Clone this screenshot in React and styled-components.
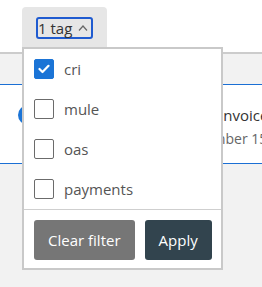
import React, { useState } from 'react';
import styled, { createGlobalStyle } from 'styled-components';

const GlobalStyle = createGlobalStyle`
  html, body {
    margin: 0;
    padding: 0;
    background: #f2f2f2;
    font-family: "Open Sans", "Liberation Sans", sans-serif;
  }
  * { box-sizing: border-box; }
`;

const Page = styled.div`
  width: 262px;
  height: 287px;
  overflow: hidden;
  background: #f2f2f2;
`;

const Toolbar = styled.div`
  height: 54px;
  padding: 7px 0 0 22px;
  background: #fff;
  border-bottom: 2px solid #cccccc;
`;

const Filter = styled.div`
  position: relative;
  display: inline-flex;
  height: 40px;
  padding: 10px 14px 8px;
  background: #e6e6e6;
  border-radius: 4px 4px 0 0;
`;

const TagButton = styled.button`
  display: inline-flex;
  align-items: center;
  gap: 6px;
  height: 22px;
  padding: 0 3px 0 0;
  margin: 0;
  border: 2px solid #1f5bd0;
  border-radius: 3px;
  background: transparent;
  font-family: inherit;
  font-size: 15px;
  line-height: 18px;
  color: #333;
  cursor: pointer;
`;

const Menu = styled.div`
  position: absolute;
  top: 100%;
  left: 0;
  z-index: 2;
  width: 201px;
  background: #fff;
  border: 2px solid #c9c9c9;
`;

const Options = styled.ul`
  list-style: none;
  margin: 0;
  padding: 0;
  border-bottom: 1px solid #cfcfcf;
`;

const Option = styled.li`
  display: flex;
  align-items: center;
  gap: 10px;
  height: 40px;
  padding-left: 10px;
  font-size: 15px;
  color: #555;
  cursor: pointer;
`;

const Box = styled.span`
  display: flex;
  align-items: center;
  justify-content: center;
  width: 20px;
  height: 20px;
  border-radius: 2px;
  border: 1px solid ${p => (p.$checked ? '#1b74d6' : '#6b6b6b')};
  background: ${p => (p.$checked ? '#1b74d6' : '#fff')};
`;

const Actions = styled.div`
  display: flex;
  gap: 10px;
  padding: 10px 9px 8px 10px;
`;

const Button = styled.button`
  flex: none;
  height: 40px;
  padding: 0 14px;
  border: none;
  border-radius: 3px;
  background: ${p => (p.$primary ? '#32444e' : '#767676')};
  color: #fff;
  font-family: inherit;
  font-size: 15px;
  white-space: nowrap;
  cursor: pointer;
`;

const List = styled.div`
  padding-top: 30px;
`;

const Card = styled.div`
  display: flex;
  align-items: flex-start;
  height: 80px;
  padding: 20px 0 0 18px;
  background: #fff;
  border-top: 1px solid #1b6fd4;
  border-bottom: 1px solid #1b6fd4;
`;

const Dot = styled.span`
  flex: none;
  width: 20px;
  height: 20px;
  border-radius: 50%;
  background: #1b74d6;
`;

const Info = styled.div`
  margin-left: 117px;
  white-space: nowrap;
`;

const Title = styled.div`
  font-size: 15px;
  line-height: 20px;
  color: #333;
`;

const Sub = styled.div`
  margin-top: 4px;
  font-size: 14px;
  line-height: 20px;
  color: #666;
`;

const Check = () => (
  <svg width="12" height="10" viewBox="0 0 12 10" fill="none">
    <polyline points="1.5,5 4.5,8 10.5,1.8" stroke="#fff" strokeWidth="2.2" strokeLinecap="round" strokeLinejoin="round" />
  </svg>
);

const Caret = () => (
  <svg width="10" height="6" viewBox="0 0 10 6" fill="none">
    <polyline points="1,5.5 5,1 9,5.5" stroke="#666" strokeWidth="1.2" />
  </svg>
);

const tags = ['cri', 'mule', 'oas', 'payments'];

export default function App() {
  const [selected, setSelected] = useState(['cri']);

  const toggle = tag =>
    setSelected(s => (s.includes(tag) ? s.filter(t => t !== tag) : [...s, tag]));

  return (
    <Page>
      <GlobalStyle />
      <Toolbar>
        <Filter>
          <TagButton>
            {selected.length} tag
            <Caret />
          </TagButton>
          <Menu>
            <Options>
              {tags.map(tag => (
                <Option key={tag} onClick={() => toggle(tag)}>
                  <Box $checked={selected.includes(tag)}>
                    {selected.includes(tag) && <Check />}
                  </Box>
                  {tag}
                </Option>
              ))}
            </Options>
            <Actions>
              <Button onClick={() => setSelected([])}>Clear filter</Button>
              <Button $primary>Apply</Button>
            </Actions>
          </Menu>
        </Filter>
      </Toolbar>
      <List>
        <Card>
          <Dot />
          <Info>
            <Title>Overdue invoice</Title>
            <Sub>Fri, November 15, 2024</Sub>
          </Info>
        </Card>
      </List>
    </Page>
  );
}
